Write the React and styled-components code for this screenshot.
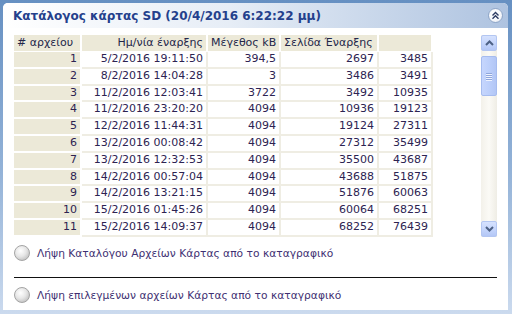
import styled, { createGlobalStyle } from "styled-components";

const GlobalStyle = createGlobalStyle`
  html, body {
    margin: 0;
    padding: 0;
  }
  body {
    font-family: "DejaVu Sans", Verdana, sans-serif;
  }
`;

const Frame = styled.div`
  width: 512px;
  height: 314px;
  box-sizing: border-box;
  padding: 3px 4px 4px 3px;
  background: linear-gradient(180deg, #6690c2 0%, #94b3d8 55%, #cbdaee 100%);
`;

const Panel = styled.div`
  height: 100%;
  display: flex;
  flex-direction: column;
  background: #fff;
  border-radius: 5px 5px 0 0;
  overflow: hidden;
`;

const Header = styled.div`
  height: 25px;
  flex-shrink: 0;
  display: flex;
  align-items: center;
  justify-content: space-between;
  padding: 0 5px 0 10px;
  background: linear-gradient(90deg, #ffffff 0%, #e6edf6 45%, #aec3e0 100%);
`;

const Title = styled.h1`
  margin: 0;
  font-size: 12px;
  font-weight: bold;
  color: #24408c;
  white-space: nowrap;
`;

const CollapseButton = styled.button`
  width: 15px;
  height: 15px;
  padding: 0;
  border: 1px solid #8ea5c6;
  border-radius: 50%;
  background: radial-gradient(circle at 40% 35%, #ffffff 0%, #f4f6fa 60%, #d6deea 100%);
  display: flex;
  align-items: center;
  justify-content: center;
  cursor: pointer;
`;

const Body = styled.div`
  flex: 1;
  display: flex;
  flex-direction: column;
  padding: 7px 11px 0 11px;
`;

const GridArea = styled.div`
  display: flex;
  height: 202px;
`;

const Viewport = styled.div`
  flex: 1;
  overflow: hidden;
`;

const Table = styled.table`
  table-layout: fixed;
  width: 419px;
  border-collapse: separate;
  border-spacing: 0;
  font-size: 11px;
  color: #2d2352;
`;

const Th = styled.th`
  height: 17px;
  padding: 0 3px;
  box-sizing: border-box;
  background: #ece9d8;
  border-right: 2px solid #fff;
  border-bottom: 1px solid #fff;
  font-weight: normal;
  text-align: ${(p) => p.$align || "left"};
  color: #232649;
  white-space: nowrap;
  overflow: hidden;
  line-height: 16px;
`;

const Td = styled.td`
  height: 16.8px;
  padding: 0 3px;
  box-sizing: border-box;
  text-align: right;
  line-height: 14.8px;
  white-space: nowrap;
  background: ${(p) => (p.$key ? "#ece9d8" : "#fff")};
  border-right: 2px solid ${(p) => (p.$key ? "#fff" : "#efede3")};
  border-bottom: 2px solid ${(p) => (p.$key ? "#fff" : "#efede3")};
`;

const Scrollbar = styled.div`
  width: 16px;
  display: flex;
  flex-direction: column;
  background: linear-gradient(90deg, #f3f1ea 0%, #fbfaf6 50%, #efede5 100%);
`;

const ScrollButton = styled.div`
  height: 16px;
  box-sizing: border-box;
  border: 1px solid #b3c6f2;
  border-radius: 2px;
  background: linear-gradient(180deg, #d6e2fe 0%, #c2d3fb 60%, #b4c7f6 100%);
  display: flex;
  align-items: center;
  justify-content: center;
  flex-shrink: 0;
`;

const Track = styled.div`
  flex: 1;
  padding-top: 5px;
`;

const Thumb = styled.div`
  height: 40px;
  box-sizing: border-box;
  border: 1px solid #a6bcef;
  border-radius: 2px;
  background: linear-gradient(90deg, #c6d6fd 0%, #bccffb 50%, #b2c6f5 100%);
  display: flex;
  flex-direction: column;
  align-items: center;
  justify-content: center;
  gap: 1px;
`;

const Grip = styled.span`
  width: 6px;
  height: 1px;
  background: #8fa6dc;
  box-shadow: 0 1px 0 #eef3ff;
`;

const Option = styled.label`
  display: flex;
  align-items: center;
  gap: 7px;
  height: 16px;
  margin-top: ${(p) => p.$top}px;
  font-size: 10.7px;
  color: #3e2f72;
  cursor: pointer;
`;

const RadioBall = styled.span`
  width: 16px;
  height: 16px;
  box-sizing: border-box;
  border-radius: 50%;
  border: 1px solid #a4a4a4;
  background: radial-gradient(circle at 40% 35%, #ffffff 0%, #e6e6e6 45%, #bdbdbd 85%, #a8a8a8 100%);
  flex-shrink: 0;
`;

const Divider = styled.hr`
  margin: 16px 0 0 0;
  border: 0;
  height: 1px;
  background: #111;
`;

const rows = [
  [1, "5/2/2016 19:11:50", "394,5", 2697, 3485],
  [2, "8/2/2016 14:04:28", "3", 3486, 3491],
  [3, "11/2/2016 12:03:41", "3722", 3492, 10935],
  [4, "11/2/2016 23:20:20", "4094", 10936, 19123],
  [5, "12/2/2016 11:44:31", "4094", 19124, 27311],
  [6, "13/2/2016 00:08:42", "4094", 27312, 35499],
  [7, "13/2/2016 12:32:53", "4094", 35500, 43687],
  [8, "14/2/2016 00:57:04", "4094", 43688, 51875],
  [9, "14/2/2016 13:21:15", "4094", 51876, 60063],
  [10, "15/2/2016 01:45:26", "4094", 60064, 68251],
  [11, "15/2/2016 14:09:37", "4094", 68252, 76439],
];

function Arrow({ up }) {
  return (
    <svg width="9" height="6" viewBox="0 0 9 6">
      <path
        d={up ? "M1 5 L4.5 1.5 L8 5" : "M1 1 L4.5 4.5 L8 1"}
        fill="none"
        stroke="#4d6185"
        strokeWidth="2"
      />
    </svg>
  );
}

export default function App() {
  return (
    <>
      <GlobalStyle />
      <Frame>
        <Panel>
          <Header>
            <Title>Κατάλογος κάρτας SD (20/4/2016 6:22:22 μμ)</Title>
            <CollapseButton aria-label="collapse">
              <svg width="9" height="9" viewBox="0 0 9 9">
                <path
                  d="M1.5 4.5 L4.5 1.5 L7.5 4.5 M1.5 7.8 L4.5 4.8 L7.5 7.8"
                  fill="none"
                  stroke="#2c3b63"
                  strokeWidth="1.4"
                />
              </svg>
            </CollapseButton>
          </Header>
          <Body>
            <GridArea>
              <Viewport>
                <Table>
                  <colgroup>
                    <col style={{ width: 68 }} />
                    <col style={{ width: 126 }} />
                    <col style={{ width: 73 }} />
                    <col style={{ width: 98 }} />
                    <col style={{ width: 54 }} />
                  </colgroup>
                  <thead>
                    <tr>
                      <Th># αρχείου</Th>
                      <Th $align="right">Ημ/νία έναρξης</Th>
                      <Th>Μέγεθος kB</Th>
                      <Th>Σελίδα Έναρξης</Th>
                      <Th />
                    </tr>
                  </thead>
                  <tbody>
                    {rows.map((r) => (
                      <tr key={r[0]}>
                        <Td $key>{r[0]}</Td>
                        <Td>{r[1]}</Td>
                        <Td>{r[2]}</Td>
                        <Td>{r[3]}</Td>
                        <Td>{r[4]}</Td>
                      </tr>
                    ))}
                  </tbody>
                </Table>
              </Viewport>
              <Scrollbar>
                <ScrollButton>
                  <Arrow up />
                </ScrollButton>
                <Track>
                  <Thumb>
                    <Grip />
                    <Grip />
                    <Grip />
                    <Grip />
                  </Thumb>
                </Track>
                <ScrollButton>
                  <Arrow />
                </ScrollButton>
              </Scrollbar>
            </GridArea>
            <Option $top={8}>
              <RadioBall />
              Λήψη Καταλόγου Αρχείων Κάρτας από το καταγραφικό
            </Option>
            <Divider />
            <Option $top={9}>
              <RadioBall />
              Λήψη επιλεγμένων αρχείων Κάρτας από το καταγραφικό
            </Option>
          </Body>
        </Panel>
      </Frame>
    </>
  );
}
